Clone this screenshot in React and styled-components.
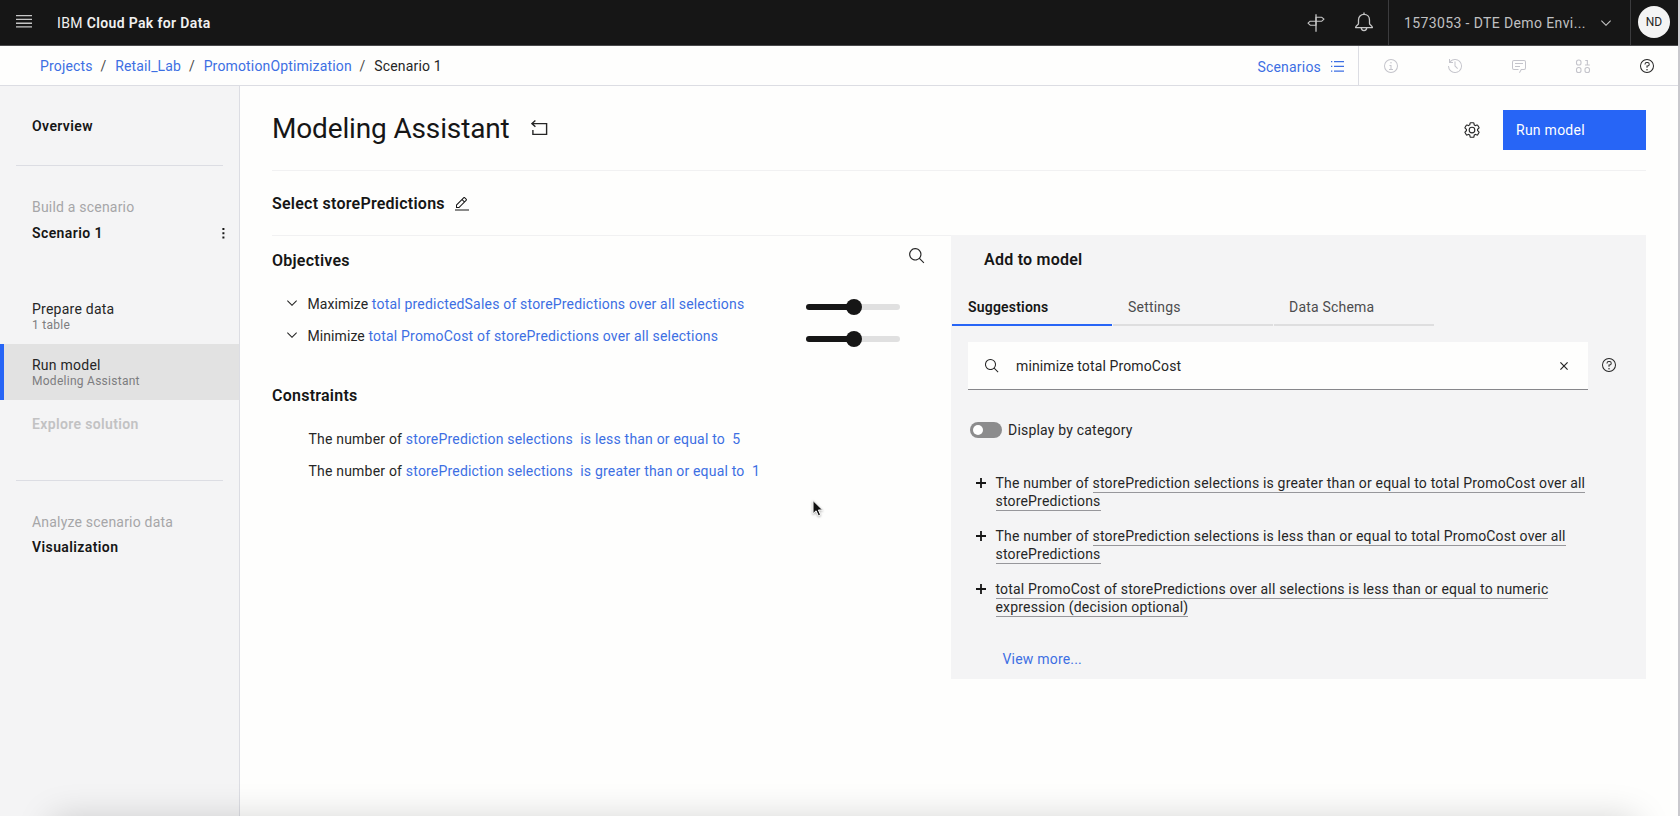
import React from 'react';
import styled, { createGlobalStyle } from 'styled-components';

const color = {
  ink: '#161616',
  text: '#262626',
  link: '#3d6fe3',
  blue: '#2765f6',
  muted: '#a6a6a8',
  line: '#dcdde3',
  layer: '#f4f4f5',
  page: '#fefefd',
};

const GlobalStyle = createGlobalStyle`
  * { box-sizing: border-box; }
  body {
    margin: 0;
    overflow: hidden;
    background: ${color.page};
    color: ${color.text};
    font: 400 14px/18px Roboto, "Liberation Sans", sans-serif;
    letter-spacing: 0.2px;
  }
  svg { display: block; flex: none; }
  h1, h2, h3, p, ul { margin: 0; padding: 0; font-weight: 400; }
  ul { list-style: none; }
  button { font: inherit; letter-spacing: inherit; border: 0; }
`;

/* ---------- icons ---------- */

const Icon = ({ size = 16, box = 32, children, ...rest }) => (
  <svg width={size} height={size} viewBox={`0 0 ${box} ${box}`} fill="currentColor" {...rest}>
    {children}
  </svg>
);

const RING = 'M16,2A14,14,0,1,0,30,16,14,14,0,0,0,16,2Zm0,26A12,12,0,1,1,28,16,12,12,0,0,1,16,28Z';

const MenuIcon = () => (
  <svg width="16" height="13" viewBox="0 0 16 13" fill="currentColor">
    <path d="M0 0h16v1.3H0zM0 3.8h16v1.3H0zM0 7.6h16v1.3H0zM0 11.2h16v1.3H0z" />
  </svg>
);

const SignpostIcon = () => (
  <svg width="18" height="18" viewBox="0 0 18 18" fill="none" stroke="currentColor" strokeWidth="1.1">
    <path d="M9 0.2V17.8" strokeWidth="1.3" />
    <path d="M9 3.3h5.8l2.2 1.9-2.2 2H9z" strokeLinejoin="round" />
    <path d="M9 7.2H3.2L1 9.2l2.2 2H9z" strokeLinejoin="round" />
  </svg>
);

const BellIcon = () => (
  <svg width="20" height="20" viewBox="0 0 20 20" fill="none" stroke="currentColor" strokeWidth="1.3">
    <path d="M10 0.6v2" />
    <path d="M10 2.4c-3.3 0-5.5 2.4-5.5 5.6v3.4c0 1.6-2.9 2.3-2.9 4.2h16.8c0-1.9-2.9-2.6-2.9-4.2V8c0-3.2-2.2-5.6-5.5-5.6z" strokeLinejoin="round" />
    <path d="M7.3 15.8c0 1.7 1.1 2.8 2.7 2.8s2.7-1.1 2.7-2.8" />
  </svg>
);

const ChevronIcon = ({ size }) => (
  <Icon size={size}><path d="M16 22L6 12 7.4 10.6 16 19.2 24.6 10.6 26 12z" /></Icon>
);

const ListIcon = () => (
  <svg width="13" height="11" viewBox="0 0 13 11" fill="currentColor">
    <path d="M0 0h1.3v1.2H0zM3 0h10v1.2H3zM0 4.8h1.3V6H0zM3 4.8h10V6H3zM0 9.6h1.3v1.2H0zM3 9.6h10v1.2H3z" />
  </svg>
);

const InfoIcon = () => (
  <Icon>
    <path d={RING} />
    <path d="M17 22V14H13v2h2v6H12v2h8V22zM16 8a1.5 1.5 0 1 0 1.5 1.5A1.5 1.5 0 0 0 16 8z" />
  </Icon>
);

const HistoryIcon = () => (
  <Icon>
    <path d="M20.59 22L15 16.41V7h2v8.58l5 5.01L20.59 22z" />
    <path d="M16,2A13.94,13.94,0,0,0,6,6.23V2H4v8h8V8H7.08A12,12,0,1,1,4,16H2A14,14,0,1,0,16,2Z" />
  </Icon>
);

const ChatIcon = () => (
  <Icon>
    <path d="M17.74,30,16,29l4-7h6a2,2,0,0,0,2-2V8a2,2,0,0,0-2-2H6A2,2,0,0,0,4,8V20a2,2,0,0,0,2,2h9v2H6a4,4,0,0,1-4-4V8A4,4,0,0,1,6,4H26a4,4,0,0,1,4,4V20a4,4,0,0,1-4,4H21.16Z" />
    <path d="M8 10H24V12H8zM8 16H18V18H8z" />
  </Icon>
);

const BinaryIcon = () => (
  <Icon fill="none" stroke="currentColor" strokeWidth="2.2">
    <rect x="3" y="4" width="9" height="10" rx="4.2" />
    <rect x="3" y="19" width="9" height="10" rx="4.2" />
    <rect x="20" y="19" width="9" height="10" rx="4.2" />
    <path d="M20.5 5h4.2v9M20 14h9.5" />
  </Icon>
);

const HelpIcon = () => (
  <Icon>
    <path d={RING} />
    <circle cx="16" cy="23.5" r="1.5" />
    <path d="M17,8H15.5A4.49,4.49,0,0,0,11,12.5V13h2v-.5A2.5,2.5,0,0,1,15.5,10H17a2.5,2.5,0,0,1,0,5H15v4.5h2V17a4.5,4.5,0,0,0,0-9Z" />
  </Icon>
);

const SearchIcon = ({ size }) => (
  <Icon size={size}>
    <path d="M29,27.5859l-7.5521-7.5521a11.0177,11.0177,0,1,0-1.4141,1.4141L27.5859,29ZM4,13a9,9,0,1,1,9,9A9.01,9.01,0,0,1,4,13Z" />
  </Icon>
);

const EditIcon = () => (
  <Icon>
    <path d="M2 27H30V29H2zM25.4,9c0.8-0.8,0.8-2,0-2.8l-3.6-3.6c-0.8-0.8-2-0.8-2.8,0l-15,15V24h6.4L25.4,9z M20.4,4L24,7.6l-3,3L17.4,7L20.4,4z M6,22v-3.6l10-10l3.6,3.6l-10,10H6z" />
  </Icon>
);

const GearIcon = () => (
  <Icon size={18}>
    <path d="M27,16.76c0-.25,0-.5,0-.76s0-.51,0-.77l1.92-1.68A2,2,0,0,0,29.3,11L26.94,7a2,2,0,0,0-1.73-1,2,2,0,0,0-.64.1l-2.43.82a11.35,11.35,0,0,0-1.31-.75l-.51-2.52a2,2,0,0,0-2-1.61H13.64a2,2,0,0,0-2,1.61l-.51,2.52a11.48,11.48,0,0,0-1.32.75L7.43,6.06A2,2,0,0,0,6.79,6,2,2,0,0,0,5.06,7L2.7,11a2,2,0,0,0,.41,2.51L5,15.24c0,.25,0,.5,0,.76s0,.51,0,.77L3.11,18.45A2,2,0,0,0,2.7,21L5.06,25a2,2,0,0,0,1.73,1,2,2,0,0,0,.64-.1l2.43-.82a11.35,11.35,0,0,0,1.31.75l.51,2.52a2,2,0,0,0,2,1.61h4.72a2,2,0,0,0,2-1.61l.51-2.52a11.48,11.48,0,0,0,1.32-.75l2.42.82a2,2,0,0,0,.64.1,2,2,0,0,0,1.73-1L29.3,21a2,2,0,0,0-.41-2.51ZM25.21,24l-3.43-1.16a8.86,8.86,0,0,1-2.71,1.57L18.36,28H13.64l-.71-3.55a9.36,9.36,0,0,1-2.7-1.57L6.79,24,4.43,20l2.72-2.4a8.9,8.9,0,0,1,0-3.13L4.43,12,6.79,8l3.43,1.16a8.86,8.86,0,0,1,2.71-1.57L13.64,4h4.72l.71,3.55a9.36,9.36,0,0,1,2.7,1.57L25.21,8,27.57,12l-2.72,2.4a8.9,8.9,0,0,1,0,3.13L27.57,20Z" />
    <path d="M16,22a6,6,0,1,1,6-6A5.94,5.94,0,0,1,16,22Zm0-10a3.91,3.91,0,0,0-4,4,3.91,3.91,0,0,0,4,4,3.91,3.91,0,0,0,4-4A3.91,3.91,0,0,0,16,12Z" />
  </Icon>
);

const ResetIcon = () => (
  <svg width="17" height="16" viewBox="0 0 17 16" fill="none" stroke="currentColor" strokeWidth="1.4">
    <path d="M4.4 0.5L1 3.6l3.4 3.1M1 3.6h14.6v10.8H1.9V10" />
  </svg>
);

const KebabIcon = () => (
  <svg width="3" height="11" viewBox="0 0 3 11" fill="currentColor">
    <path d="M.4 0h2v2h-2zM.4 4.3h2v2h-2zM.4 8.6h2v2h-2z" />
  </svg>
);

const CloseIcon = () => (
  <svg width="8" height="8" viewBox="0 0 8 8" stroke="currentColor" strokeWidth="1.2">
    <path d="M.4.4l7.2 7.2M7.6.4L.4 7.6" />
  </svg>
);

const PlusIcon = () => (
  <svg width="10" height="10" viewBox="0 0 10 10" stroke="currentColor" strokeWidth="1.8">
    <path d="M5 0v10M0 5h10" />
  </svg>
);

/* ---------- shell ---------- */

const Page = styled.div`
  position: relative;
  display: flex;
  flex-direction: column;
  height: 816px;
  overflow: hidden;
  border-right: 2px solid #c9c9ce;
`;

const TopBar = styled.header`
  display: flex;
  align-items: stretch;
  height: 46px;
  flex: none;
  background: ${color.ink};
  border-bottom: 1px solid #4a4a4c;
  color: #c6c6c6;
`;

const TopCell = styled.div`
  display: flex;
  align-items: center;
  width: ${(p) => p.$w}px;
  padding: ${(p) => p.$pad || 0};
  border-left: ${(p) => (p.$rule ? '1px solid #3c3c3e' : '0')};
`;

const Brand = styled.div`
  flex: 1;
  padding: 14px 0 0 25px;
  color: #f1f1f1;
  letter-spacing: 0.36px;
  b { font-weight: 600; }
`;

const AccountName = styled.span`
  width: 209px;
  padding: 0 0 0 15px;
  letter-spacing: 0.38px;
  color: #c0c0c2;
`;

const Avatar = styled.div`
  width: 32px;
  height: 32px;
  border-radius: 50%;
  background: #f4f4f4;
  color: ${color.text};
  font-size: 12px;
  line-height: 32px;
  text-align: center;
  letter-spacing: 0;
`;

const SubBar = styled.div`
  display: flex;
  height: 40px;
  flex: none;
  margin-right: -1px;
  border-bottom: 1px solid ${color.line};
`;

const Crumbs = styled.nav`
  display: flex;
  flex: 1;
  padding: 11px 0 0 40px;
  letter-spacing: 0.16px;
`;

const Crumb = styled.span`
  color: ${(p) => (p.$here ? color.text : color.link)};
  &:not(:first-child)::before {
    content: '/';
    display: inline-block;
    width: 21.5px;
    padding-right: 1px;
    text-align: center;
    color: #4a4a4a;
  }
`;

const ScenariosLink = styled.a`
  display: flex;
  gap: 10px;
  align-items: center;
  padding: 2px 14px 0 0;
  color: ${color.link};
  border-right: 1px solid ${color.line};
`;

const Tool = styled.div`
  display: grid;
  place-items: center;
  width: 64px;
  color: ${(p) => (p.$active ? color.text : '#c4c4cb')};
`;

const Body = styled.div`
  display: flex;
  flex: 1;
  min-height: 0;
`;

/* ---------- side navigation ---------- */

const Sidebar = styled.aside`
  width: 240px;
  flex: none;
  padding-top: 31px;
  background: ${color.layer};
  border-right: 1px solid ${color.line};
`;

const SideLabel = styled.div`
  display: flex;
  justify-content: space-between;
  align-items: center;
  height: 18px;
  margin-top: ${(p) => p.$gap || 0}px;
  padding: 0 14px 0 32px;
  font-weight: ${(p) => (p.$muted ? 400 : 600)};
  color: ${(p) => (p.$muted ? color.muted : color.ink)};
  letter-spacing: ${(p) => (p.$muted ? 0.2 : 0.4)}px;
`;

const SideRule = styled.hr`
  height: 1px;
  margin: ${(p) => p.$gap}px 16px 32px;
  border: 0;
  background: ${color.line};
`;

const Step = styled.div`
  height: 56px;
  padding: 12px 0 0 ${(p) => (p.$active ? 28 : 32)}px;
  border-left: ${(p) => (p.$active ? `4px solid ${color.blue}` : '0')};
  background: ${(p) => (p.$active ? '#e2e2e2' : 'transparent')};
`;

const StepTitle = styled.div`
  font-weight: ${(p) => (p.$disabled ? 600 : 400)};
  color: ${(p) => (p.$disabled ? '#c2c2c3' : color.text)};
  padding-top: ${(p) => (p.$disabled ? 3 : 0)}px;
  letter-spacing: ${(p) => (p.$disabled ? 0.36 : 0.24)}px;
`;

const StepNote = styled.div`
  font-size: 12px;
  line-height: 15px;
  letter-spacing: 0.27px;
  color: #7d7d7f;
`;

const Steps = styled.div`
  margin-top: 46px;
  height: 177px;
`;

/* ---------- main area ---------- */

const Main = styled.main`
  flex: 1;
  padding: 0 32px;
`;

const TitleRow = styled.div`
  display: flex;
  align-items: center;
  height: 85px;
  border-bottom: 1px solid #f1f1f2;
`;

const Title = styled.h1`
  padding-top: 2px;
  font-size: 28px;
  line-height: 36px;
  letter-spacing: -0.15px;
  color: ${color.ink};
  margin-right: 21px;
`;

const Actions = styled.div`
  display: flex;
  align-items: center;
  gap: 22px;
  margin: 4px 0 0 auto;
`;

const RunButton = styled.button`
  width: 143px;
  height: 40px;
  padding: 0 13px;
  text-align: left;
  letter-spacing: 0.26px;
  color: #fff;
  background: ${color.blue};
`;

const SelectionRow = styled.div`
  display: flex;
  align-items: center;
  gap: 9px;
  height: 65px;
  padding-top: 2px;
  border-bottom: 1px solid #f1f1f2;
  color: ${color.ink};
`;

const Heading = styled.h2`
  font-size: 16px;
  line-height: 20px;
  font-weight: 600;
  letter-spacing: 0.24px;
  color: ${color.ink};
`;

const Columns = styled.div`
  display: flex;
  align-items: flex-start;
`;

const ModelColumn = styled.section`
  flex: 1;
`;

const SectionHead = styled.div`
  display: flex;
  justify-content: space-between;
  align-items: flex-start;
  padding: ${(p) => p.$pad};
  svg { margin-top: -4px; }
`;

const Statement = styled.div`
  display: flex;
  align-items: center;
  height: 32px;
  padding: 0 51px 0 ${(p) => (p.$plain ? 36.5 : 12)}px;
`;

const Expand = styled.span`
  width: 23.5px;
  padding-bottom: 2px;
`;

const Phrase = styled.p`
  flex: 1;
  white-space: pre;
  color: ${color.text};
  letter-spacing: ${(p) => (p.$tight ? 0.08 : 0.2)}px;
`;

const Term = styled.a`
  color: ${color.link};
  letter-spacing: 0.19px;
`;

const Track = styled.div`
  display: flex;
  align-items: center;
  width: 94px;
  height: 6px;
  margin-top: 6px;
  border-radius: 3px;
  background: linear-gradient(90deg, ${color.ink} 50%, #e0e0e0 50%);
`;

const Thumb = styled.span`
  width: 16px;
  height: 16px;
  margin-left: 40px;
  border-radius: 50%;
  background: ${color.ink};
`;

/* ---------- suggestion panel ---------- */

const Panel = styled.section`
  width: 695px;
  height: 444px;
  margin-top: -1px;
  padding-left: 1px;
  background: ${color.layer};
`;

const PanelHeading = styled(Heading)`
  padding: 15px 0 0 32px;
`;

const Tabs = styled.div`
  display: flex;
  gap: 1px;
  margin-top: 16px;
`;

const Tab = styled.div`
  width: 160px;
  height: 40px;
  padding: 12px 16px 0 ${(p) => (p.$active ? 16 : 15)}px;
  border-bottom: 2px solid ${(p) => (p.$active ? color.blue : '#dededf')};
  font-weight: ${(p) => (p.$active ? 600 : 400)};
  color: ${(p) => (p.$active ? color.ink : '#4c4c4e')};
`;

const SearchRow = styled.div`
  display: flex;
  align-items: center;
  gap: 13px;
  margin: 16px 0 0 16px;
`;

const SearchField = styled.div`
  display: flex;
  align-items: center;
  width: 620px;
  height: 48px;
  padding: 0 20px 0 16px;
  background: ${color.page};
  border-bottom: 1px solid #87878b;
`;

const Query = styled.span`
  flex: 1;
  padding-left: 16px;
  letter-spacing: 0.12px;
  color: ${color.text};
`;

const HelpSpot = styled.span`
  padding-bottom: 3px;
`;

const CategoryToggle = styled.div`
  display: flex;
  align-items: center;
  gap: 6px;
  height: 18px;
  margin: 31px 0 0 18px;
`;

const Switch = styled.span`
  width: 32px;
  height: 16px;
  padding: 3px;
  border-radius: 8px;
  background: #8c8c8d;
  &::before {
    content: '';
    display: block;
    width: 10px;
    height: 10px;
    border-radius: 50%;
    background: #fff;
  }
`;

const SuggestionList = styled.ul`
  display: grid;
  gap: 17px;
  margin: 35px 0 0 24px;
`;

const Suggestion = styled.li`
  display: flex;
  gap: 9.5px;
  color: ${color.ink};
  svg { margin-top: 4px; }
`;

const SuggestionText = styled.p`
  width: 596px;
  letter-spacing: 0.18px;
  color: ${color.text};
`;

const Slot = styled.span`
  padding-bottom: 1px;
  border-bottom: 1px solid #97979b;
`;

const MoreLink = styled.a`
  display: block;
  margin: 34px 0 0 50.5px;
  color: ${color.link};
`;

/* ---------- overlays ---------- */

const Cursor = styled.svg`
  position: absolute;
  left: 811px;
  top: 499px;
  filter: drop-shadow(0 1px 1px rgba(0, 0, 0, 0.3));
`;

const BottomShade = styled.div`
  position: absolute;
  left: 58px;
  right: 48px;
  top: 825px;
  height: 40px;
  box-shadow: 0 0 36px 6px rgba(0, 0, 0, 0.18);
`;

const objectives = [
  ['Maximize', 'total predictedSales of storePredictions over all selections'],
  ['Minimize', 'total PromoCost of storePredictions over all selections'],
];

const constraints = [
  ['is less than or equal to', '5'],
  ['is greater than or equal to', '1'],
];

const suggestions = [
  ['The number of ', 'storePrediction selections is greater than or equal to total PromoCost over all storePredictions'],
  ['The number of ', 'storePrediction selections is less than or equal to total PromoCost over all storePredictions'],
  ['', 'total PromoCost of storePredictions over all selections is less than or equal to numeric expression (decision optional)'],
];

export default function App() {
  return (
    <Page>
      <GlobalStyle />
      <TopBar>
        <TopCell $w={32} $pad="0 0 2px 16px"><MenuIcon /></TopCell>
        <Brand>IBM <b>Cloud Pak for Data</b></Brand>
        <TopCell $w={47}><SignpostIcon /></TopCell>
        <TopCell $w={34} $pad="0 0 1px"><BellIcon /></TopCell>
        <TopCell $w={242} $rule>
          <AccountName>1573053 - DTE Demo Envi...</AccountName>
          <ChevronIcon size={16} />
        </TopCell>
        <TopCell $w={48} $rule $pad="0 0 1px 7px"><Avatar>ND</Avatar></TopCell>
      </TopBar>

      <SubBar>
        <Crumbs>
          <Crumb>Projects</Crumb>
          <Crumb>Retail_Lab</Crumb>
          <Crumb>PromotionOptimization</Crumb>
          <Crumb $here>Scenario 1</Crumb>
        </Crumbs>
        <ScenariosLink>Scenarios <ListIcon /></ScenariosLink>
        <Tool><InfoIcon /></Tool>
        <Tool><HistoryIcon /></Tool>
        <Tool><ChatIcon /></Tool>
        <Tool><BinaryIcon /></Tool>
        <Tool $active><HelpIcon /></Tool>
      </SubBar>

      <Body>
        <Sidebar>
          <SideLabel>Overview</SideLabel>
          <SideRule $gap={30} />
          <SideLabel $muted>Build a scenario</SideLabel>
          <SideLabel $gap={8}>Scenario 1 <KebabIcon /></SideLabel>
          <Steps>
            <Step>
              <StepTitle>Prepare data</StepTitle>
              <StepNote>1 table</StepNote>
            </Step>
            <Step $active>
              <StepTitle>Run model</StepTitle>
              <StepNote>Modeling Assistant</StepNote>
            </Step>
            <Step>
              <StepTitle $disabled>Explore solution</StepTitle>
            </Step>
          </Steps>
          <SideRule $gap={15} />
          <SideLabel $muted>Analyze scenario data</SideLabel>
          <SideLabel $gap={7}>Visualization</SideLabel>
        </Sidebar>

        <Main>
          <TitleRow>
            <Title>Modeling Assistant</Title>
            <ResetIcon />
            <Actions>
              <GearIcon />
              <RunButton>Run model</RunButton>
            </Actions>
          </TitleRow>
          <SelectionRow>
            <Heading>Select storePredictions</Heading>
            <EditIcon />
          </SelectionRow>
          <Columns>
            <ModelColumn>
              <SectionHead $pad="15px 25px 17px 0">
                <Heading>Objectives</Heading>
                <SearchIcon size={18} />
              </SectionHead>
              {objectives.map(([verb, term]) => (
                <Statement key={verb}>
                  <Expand><ChevronIcon size={16} /></Expand>
                  <Phrase $tight>{verb} <Term>{term}</Term></Phrase>
                  <Track><Thumb /></Track>
                </Statement>
              ))}
              <SectionHead $pad="34px 0 17px">
                <Heading>Constraints</Heading>
              </SectionHead>
              {constraints.map(([relation, value]) => (
                <Statement key={value} $plain>
                  <Phrase>
                    The number of <Term>storePrediction selections</Term>
                    {'  '}<Term>{relation}</Term>{'  '}<Term>{value}</Term>
                  </Phrase>
                </Statement>
              ))}
            </ModelColumn>

            <Panel>
              <PanelHeading>Add to model</PanelHeading>
              <Tabs>
                <Tab $active>Suggestions</Tab>
                <Tab>Settings</Tab>
                <Tab>Data Schema</Tab>
              </Tabs>
              <SearchRow>
                <SearchField>
                  <SearchIcon size={16} />
                  <Query>minimize total PromoCost</Query>
                  <CloseIcon />
                </SearchField>
                <HelpSpot><HelpIcon /></HelpSpot>
              </SearchRow>
              <CategoryToggle>
                <Switch />
                Display by category
              </CategoryToggle>
              <SuggestionList>
                {suggestions.map(([lead, slot]) => (
                  <Suggestion key={slot}>
                    <PlusIcon />
                    <SuggestionText>{lead}<Slot>{slot}</Slot></SuggestionText>
                  </Suggestion>
                ))}
              </SuggestionList>
              <MoreLink>View more...</MoreLink>
            </Panel>
          </Columns>
        </Main>
      </Body>

      <Cursor width="14" height="20" viewBox="0 0 14 20">
        <path d="M2 1.5v13.2l3.1-2.9 2.2 5 2.3-1-2.2-4.8h4.2z" fill="#111" stroke="#fff" strokeWidth="1" />
      </Cursor>
      <BottomShade />
    </Page>
  );
}
